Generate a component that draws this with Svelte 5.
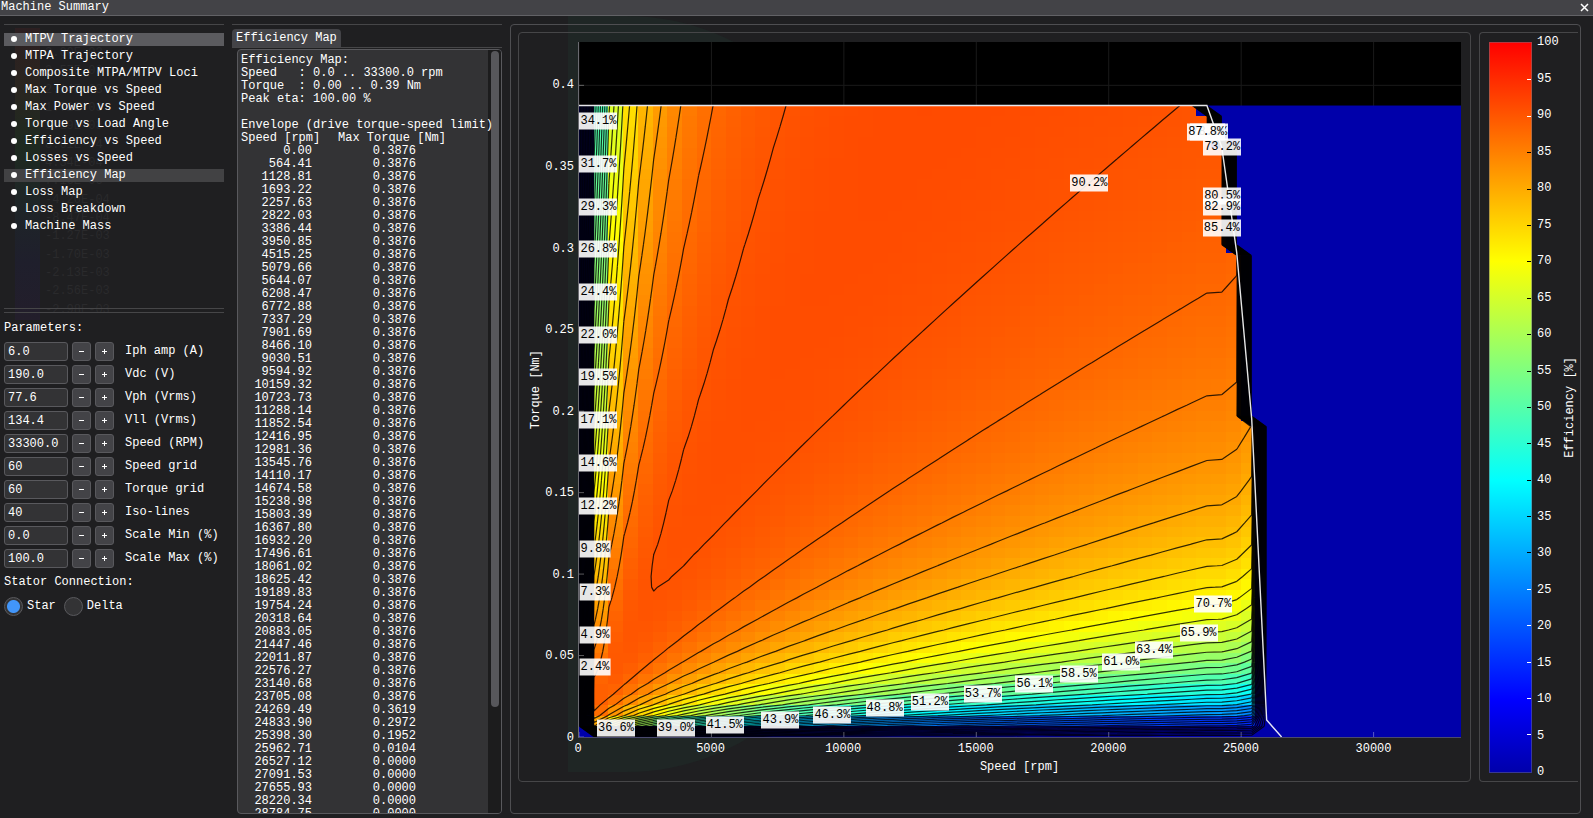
<script>
	const COUNT = 60;
	const MAX_RPM = 33300;
	const PEAK_NM = 0.3876;
	const AXIS_NM = 0.4266;
	const ISO_LINES = 40;

	// plot units used by the svg, it is stretched to the frame
	const W = 882;
	const H = 695;

	let pages = [
		"MTPV Trajectory", "MTPA Trajectory", "Composite MTPA/MTPV Loci", "Max Torque vs Speed",
		"Max Power vs Speed", "Torque vs Load Angle", "Efficiency vs Speed", "Losses vs Speed",
		"Efficiency Map", "Loss Map", "Loss Breakdown", "Machine Mass",
	];
	let selected = "Efficiency Map";
	let focused = "MTPV Trajectory";

	let params = [
		{ id: "iph", label: "Iph amp (A)", value: "6.0" },
		{ id: "vdc", label: "Vdc (V)", value: "190.0" },
		{ id: "vph", label: "Vph (Vrms)", value: "77.6" },
		{ id: "vll", label: "Vll (Vrms)", value: "134.4" },
		{ id: "rpm", label: "Speed (RPM)", value: "33300.0" },
		{ id: "sgrid", label: "Speed grid", value: "60" },
		{ id: "tgrid", label: "Torque grid", value: "60" },
		{ id: "iso", label: "Iso-lines", value: "40" },
		{ id: "smin", label: "Scale Min (%)", value: "0.0" },
		{ id: "smax", label: "Scale Max (%)", value: "100.0" },
	];
	let connection = "Star";

	function step(p, d) {
		p.value = (parseFloat(p.value) + d).toFixed(p.value.includes(".") ? 1 : 0);
		params = params;
	}

	const intro = `Efficiency Map:
Speed   : 0.0 .. 33300.0 rpm
Torque  : 0.00 .. 0.39 Nm
Peak eta: 100.00 %

Envelope (drive torque-speed limit)`;

	// speeds are single precision floats
	const falling = [0.3619, 0.2972, 0.1952, 0.0104];
	const envelope = Array.from({ length: COUNT }, (_, i) => ({
		rpm: Math.fround((i * MAX_RPM) / (COUNT - 1)),
		nm: i < 43 ? PEAK_NM : falling[i - 43] ?? 0,
	}));

	const px = (rpm) => (rpm / MAX_RPM) * W;
	const py = (nm) => H - (nm / AXIS_NM) * H;

	const weakening = { 43: 0.985, 45: 1.06 };
	function eta(i, j) {
		const s = envelope[i].rpm;
		const t = (j * PEAK_NM) / (COUNT - 1);
		if (!s || !t || i > 45) return 0;
		if (t > envelope[i].nm || (i === 42 && j === COUNT - 1)) return 0;
		const iron = (0.0002 + 5.14e-6 * Math.pow(s, 0.87)) * (weakening[i] ?? 1);
		return 100 / (1 + (1517 * t) / s + iron / t);
	}
	const grid = Array.from({ length: COUNT }, (_, i) => Array.from({ length: COUNT }, (_, j) => eta(i, j)));

	const jet = [
		[0, 0, 170], [0, 0, 255], [0, 85, 255], [0, 170, 255], [0, 255, 255], [85, 255, 170],
		[170, 255, 85], [255, 255, 0], [255, 170, 0], [255, 85, 0], [255, 0, 0],
	];
	function color(v) {
		const k = Math.min(9, Math.floor(v / 10));
		const f = v / 10 - k;
		return `rgb(${jet[k].map((c, n) => Math.round(c + (jet[k + 1][n] - c) * f)).join(",")})`;
	}

	const cellW = W / COUNT;
	const top = py(PEAK_NM);
	const cellH = (H - top) / COUNT;
	const cells = [];
	for (let i = 0; i < COUNT; i++)
		for (let j = 0; j < COUNT; j++)
			if (grid[i][j] > 0) cells.push({ x: i * cellW, y: H - (j + 1) * cellH, fill: color(grid[i][j]) });

	// marching squares over the node grid
	function contour(level) {
		const nx = W / (COUNT - 1);
		const ny = (H - top) / (COUNT - 1);
		let d = "";
		for (let i = 0; i < COUNT - 1; i++) {
			for (let j = 0; j < COUNT - 1; j++) {
				const c = [[i, j], [i + 1, j], [i + 1, j + 1], [i, j + 1]];
				const hits = [];
				for (let k = 0; k < 4; k++) {
					const [a, b] = [c[k], c[(k + 1) % 4]];
					const va = grid[a[0]][a[1]];
					const vb = grid[b[0]][b[1]];
					if (va < level === vb < level) continue;
					const f = (level - va) / (vb - va);
					const x = (a[0] + (b[0] - a[0]) * f) * nx;
					const y = H - (a[1] + (b[1] - a[1]) * f) * ny;
					hits.push(`${x.toFixed(2)} ${y.toFixed(2)}`);
				}
				for (let k = 0; k + 1 < hits.length; k += 2) d += `M${hits[k]}L${hits[k + 1]}`;
			}
		}
		return d;
	}
	const contours = Array.from({ length: ISO_LINES }, (_, k) => contour(((k + 1) * 100) / (ISO_LINES + 1)));

	const limit = envelope.slice(0, 48).map((e) => `${px(e.rpm)},${py(e.nm)}`).join(" ");

	// [value, rpm, Nm]
	const tags = [
		["34.1", 735, 0.3781], ["31.7", 735, 0.3517], ["29.3", 735, 0.3254], ["26.8", 735, 0.2993],
		["24.4", 735, 0.2732], ["22.0", 735, 0.2468], ["19.5", 735, 0.2207], ["17.1", 735, 0.1946],
		["14.6", 735, 0.1682], ["12.2", 735, 0.1418], ["9.8", 603, 0.1154], ["7.3", 603, 0.089],
		["4.9", 603, 0.0626], ["2.4", 603, 0.043], ["36.6", 1395, 0.0055], ["39.0", 3658, 0.0055],
		["41.5", 5505, 0.0074], ["43.9", 7606, 0.0104], ["46.3", 9567, 0.0135], ["48.8", 11538, 0.0178],
		["51.2", 13247, 0.0215], ["53.7", 15246, 0.0264], ["56.1", 17195, 0.0325], ["58.5", 18866, 0.0387],
		["61.0", 20475, 0.046], ["63.4", 21708, 0.0534], ["65.9", 23391, 0.0638], ["70.7", 23955, 0.0816],
		["73.2", 24283, 0.3622], ["78.0", 23793, 0.3714], ["80.5", 24283, 0.3321], ["82.9", 24283, 0.3254],
		["85.4", 24270, 0.3125], ["87.8", 23680, 0.3714], ["90.2", 19268, 0.3401],
	];

	const xTicks = [0, 5000, 10000, 15000, 20000, 25000, 30000];
	const yTicks = [0, 0.05, 0.1, 0.15, 0.2, 0.25, 0.3, 0.35, 0.4];
	const scale = Array.from({ length: 21 }, (_, k) => 100 - k * 5);

	const behind = [
		"3.00E-03", "2.57E-03", "2.14E-03", "1.72E-03", "1.29E-03", "8.61E-04", "4.34E-04", "7.16E-06",
		"-4.20E-04", "-8.47E-04", "-1.27E-03", "-1.70E-03", "-2.13E-03", "-2.56E-03", "-2.98E-03",
	];
</script>

<div class="window">
	<!-- window underneath, shows through the translucent background -->
	<div class="behind" aria-hidden="true">
		<div class="behind-bar"></div>
		<div class="behind-labels">
			{#each behind as b}<span>{b}</span>{/each}
		</div>
		<div class="behind-map"></div>
	</div>

	<header>
		<h1>Machine Summary</h1>
		<button class="close" aria-label="Close">
			<svg width="9" height="9" viewBox="0 0 9 9"><path d="M1 1L8 8M8 1L1 8" /></svg>
		</button>
	</header>

	<main>
		<aside>
			<ul class="pages">
				{#each pages as page}
					<li>
						<button
							class:selected={page === selected}
							class:focused={page === focused}
							on:click={() => (selected = focused = page)}
						><i></i>{page}</button>
					</li>
				{/each}
			</ul>
			<div class="rule"></div>
			<h2>Parameters:</h2>
			{#each params as p}
				<div class="param">
					<input id={p.id} type="text" bind:value={p.value} />
					<button aria-label="Decrease {p.label}" on:click={() => step(p, -1)}>
						<svg width="7" height="7" viewBox="0 0 7 7"><path d="M1 3.5H6" /></svg>
					</button>
					<button aria-label="Increase {p.label}" on:click={() => step(p, 1)}>
						<svg width="7" height="7" viewBox="0 0 7 7"><path d="M1 3.5H6M3.5 1V6" /></svg>
					</button>
					<label for={p.id}>{p.label}</label>
				</div>
			{/each}
			<h2 class="stator">Stator Connection:</h2>
			<div class="radios">
				<label><input type="radio" name="stator" value="Star" bind:group={connection} />Star</label>
				<label><input type="radio" name="stator" value="Delta" bind:group={connection} />Delta</label>
			</div>
		</aside>

		<section class="details">
			<div class="tabs"><button class="tab">Efficiency Map</button></div>
			<div class="report">
				<div class="report-text">
					<pre>{intro}</pre>
					<table>
						<thead><tr><th>Speed [rpm]</th><th>Max Torque [Nm]</th></tr></thead>
						<tbody>
							{#each envelope as e}
								<tr><td>{e.rpm.toFixed(2)}</td><td>{e.nm.toFixed(4)}</td></tr>
							{/each}
						</tbody>
					</table>
				</div>
				<div class="track"><div class="thumb"></div></div>
			</div>
		</section>

		<section class="charts">
			<div class="chart">
				<div class="y-axis">
					<span class="axis-name vertical">Torque [Nm]</span>
					<div class="y-ticks">
						{#each yTicks as t}
							<span style="top:{(py(t) / H) * 100}%">{t}</span>
						{/each}
					</div>
				</div>
				<div class="plot">
					<svg viewBox="0 0 {W} {H}" preserveAspectRatio="none">
						<g class="gridlines">
							{#each xTicks as t}<path d="M{px(t)} 0V{H}" />{/each}
							{#each yTicks as t}<path d="M0 {py(t)}H{W}" />{/each}
						</g>
						<rect x="0" y={top} width={W} height={H - top} fill="rgb(0,0,170)" />
						<g shape-rendering="crispEdges">
							{#each cells as c}
								<rect x={c.x} y={c.y} width={cellW} height={cellH} fill={c.fill} />
							{/each}
						</g>
						<g class="contours">
							{#each contours as d}<path {d} />{/each}
						</g>
						<polyline class="limit" points={limit} />
						<g class="ticks">
							{#each xTicks as t}<path d="M{px(t)} {H}v-5" />{/each}
							{#each yTicks as t}<path d="M0 {py(t)}h5" />{/each}
						</g>
					</svg>
					{#each tags as [v, rpm, nm]}
						<span class="tag" style="left:{(rpm / MAX_RPM) * 100}%;top:{(py(nm) / H) * 100}%">{v}%</span>
					{/each}
				</div>
				<div class="x-axis">
					<div class="x-ticks">
						{#each xTicks as t}
							<span style="left:{(t / MAX_RPM) * 100}%">{t}</span>
						{/each}
					</div>
					<span class="axis-name">Speed [rpm]</span>
				</div>
			</div>

			<div class="colorbar">
				<div class="gradient">
					{#each scale as v}
						<i class:light={v > 85 || v < 30} class:end={v === 0 || v === 100}></i>
					{/each}
				</div>
				<ol>
					{#each scale as v}<li>{v}</li>{/each}
				</ol>
				<span class="axis-name vertical">Efficiency [%]</span>
			</div>
		</section>
	</main>
</div>

<style>
	:global(body) {
		background: #1f1f21;
	}
	.window {
		position: relative;
		display: flex;
		flex-direction: column;
		height: 100vh;
		overflow: hidden;
		background: #1f1f21;
		color: white;
		font: 12px/13px "Liberation Mono", "DejaVu Sans Mono", monospace;
	}
	button, input {
		font: inherit;
		color: inherit;
		margin: 0;
		padding: 0;
		box-sizing: border-box;
	}
	h1, h2 {
		margin: 0;
		font: inherit;
	}
	ul, ol {
		list-style: none;
		margin: 0;
		padding: 0;
	}
	path {
		fill: none;
		stroke: white;
	}

	header {
		position: relative;
		display: flex;
		justify-content: space-between;
		align-items: center;
		height: 15px;
		flex: none;
		padding: 0 4px 0 1px;
		background: #434347;
		border-bottom: 1px solid #626266;
	}
	.close {
		display: flex;
		background: none;
		border: none;
	}
	.close path {
		stroke-width: 1.5;
	}

	main {
		position: relative;
		flex: 1;
		min-height: 0;
		display: grid;
		grid-template-columns: 220px 270px minmax(0, 1fr);
		gap: 8px;
		padding: 8px 12px 4px 4px;
	}

	.pages {
		display: flex;
		flex-direction: column;
		gap: 4px;
		height: 285px;
		box-sizing: border-box;
		padding-top: 8px;
		border-top: 1px solid #464648;
		border-bottom: 1px solid #464648;
	}
	.pages button {
		display: flex;
		align-items: center;
		width: 100%;
		height: 13px;
		padding-left: 7px;
		gap: 8px;
		background: none;
		border: none;
	}
	.pages i {
		width: 6px;
		height: 6px;
		margin-bottom: 2px;
		border-radius: 3px;
		background: white;
	}
	.pages .selected {
		background: #424244;
	}
	.pages .focused {
		background: #5b5b5f;
	}
	.rule {
		height: 3px;
		border-bottom: 1px solid #464648;
	}
	h2 {
		padding: 9px 0 7px;
	}
	.stator {
		padding: 4px 0 8px;
	}
	.param {
		display: flex;
		align-items: center;
		gap: 4px;
		margin-bottom: 4px;
	}
	.param input {
		width: 64px;
		height: 19px;
		padding: 0 3px;
		background: #333335;
		border: 1px solid #59595d;
		border-radius: 3px;
		outline: none;
	}
	.param button {
		display: flex;
		align-items: center;
		justify-content: center;
		width: 19px;
		height: 19px;
		background: #434347;
		border: 1px solid #59595d;
		border-radius: 3px;
	}
	.param label {
		padding-left: 7px;
	}
	.radios {
		display: flex;
		gap: 8px;
	}
	.radios label {
		display: flex;
		align-items: center;
		gap: 4px;
	}
	.radios input {
		appearance: none;
		width: 19px;
		height: 19px;
		border: 1px solid #59595d;
		border-radius: 50%;
		background: #333335;
	}
	.radios input:checked {
		background: radial-gradient(circle, #4296fa 6px, #333335 7px);
	}

	.details {
		display: flex;
		flex-direction: column;
		min-height: 0;
		border-top: 1px solid #464648;
	}
	.tabs {
		padding-top: 4px;
		border-bottom: 1px solid #464648;
	}
	.tab {
		display: block;
		height: 18px;
		padding: 1px 4px 0;
		background: #434347;
		border: none;
		border-radius: 4px 4px 0 0;
	}
	.report {
		flex: 1;
		min-height: 0;
		display: flex;
		overflow: hidden;
		margin: 1px 0 0 5px;
		background: #333335;
		border: 1px solid #59595d;
		border-radius: 4px;
	}
	.report-text {
		position: relative;
		z-index: 1;
		flex: 1;
		min-width: 0;
		padding: 4px 0 0 3px;
	}
	pre {
		margin: 0;
		font: inherit;
	}
	table {
		table-layout: fixed;
		width: 220px;
		border-collapse: collapse;
	}
	th, td {
		height: 13px;
		padding: 0;
		white-space: nowrap;
	}
	th {
		font-weight: normal;
		text-align: left;
	}
	th:first-child {
		width: 97px;
	}
	td {
		text-align: right;
	}
	td:first-child {
		padding-right: 26px;
	}
	td:last-child {
		padding-right: 45px;
	}
	.track {
		width: 13px;
		background: #1c1c1d;
	}
	.thumb {
		width: 8px;
		height: 86%;
		margin: 1px 0 0 3px;
		border-radius: 4px;
		background: #57575b;
	}

	.charts {
		display: grid;
		grid-template-columns: minmax(0, 1fr) 99px;
		gap: 8px;
		min-height: 0;
		padding: 7px 2px 31px 7px;
		border: 1px solid #4e4e51;
		border-radius: 4px;
	}
	.chart {
		display: grid;
		grid-template-columns: 59px minmax(0, 1fr);
		grid-template-rows: minmax(0, 1fr) 43px;
		min-height: 0;
		padding: 9px 9px 0 0;
		border: 1px solid #464648;
		border-radius: 4px;
	}
	.y-axis {
		display: flex;
		align-items: center;
		padding-left: 11px;
	}
	.axis-name {
		white-space: nowrap;
	}
	.vertical {
		writing-mode: vertical-rl;
		transform: rotate(180deg);
	}
	.y-ticks {
		position: relative;
		flex: 1;
		height: 100%;
	}
	.y-ticks span {
		position: absolute;
		right: 4px;
		transform: translateY(-50%);
	}
	.plot {
		position: relative;
		background: black;
		border-left: 1px solid #6a6a70;
		border-bottom: 1px solid #4a4a6e;
	}
	.plot svg {
		display: block;
		position: absolute;
		width: 100%;
		height: 100%;
	}
	.plot path, .limit {
		vector-effect: non-scaling-stroke;
	}
	.gridlines path {
		stroke: #1a1a1a;
	}
	.contours path {
		stroke: rgba(0, 0, 0, 0.8);
		stroke-width: 1.2;
	}
	.limit {
		fill: none;
		stroke: rgba(255, 255, 255, 0.9);
		stroke-width: 1.4;
	}
	.plot .ticks path {
		stroke: rgba(255, 255, 255, 0.35);
	}
	.tag {
		position: absolute;
		transform: translate(-50%, -50%);
		padding: 2px 1px;
		background: rgba(255, 255, 255, 0.9);
		color: black;
	}
	.x-axis {
		grid-column: 2;
		display: flex;
		flex-direction: column;
		align-items: center;
		gap: 5px;
		padding-top: 5px;
	}
	.x-ticks {
		position: relative;
		align-self: stretch;
		height: 13px;
	}
	.x-ticks span {
		position: absolute;
		transform: translateX(-50%);
	}

	.colorbar {
		display: flex;
		align-items: center;
		border: 1px solid #464648;
		border-right: none;
		border-radius: 4px 0 0 4px;
		padding: 9px 0 8px 9px;
		min-height: 0;
	}
	.gradient {
		display: flex;
		flex-direction: column;
		justify-content: space-between;
		align-items: flex-end;
		width: 43px;
		height: 100%;
		box-sizing: border-box;
		border: 1px solid rgba(110, 110, 128, 0.5);
		background: linear-gradient(
			rgb(255, 0, 0), rgb(255, 85, 0), rgb(255, 170, 0), rgb(255, 255, 0), rgb(170, 255, 85),
			rgb(85, 255, 170), rgb(0, 255, 255), rgb(0, 170, 255), rgb(0, 85, 255), rgb(0, 0, 255), rgb(0, 0, 170)
		) border-box;
	}
	.gradient i {
		width: 4px;
		height: 1px;
		background: black;
	}
	.gradient .light {
		background: white;
	}
	.gradient .end {
		visibility: hidden;
	}
	ol {
		display: flex;
		flex-direction: column;
		justify-content: space-between;
		width: 27px;
		height: 100%;
		padding-left: 5px;
	}
	ol li {
		height: 1px;
		line-height: 1px;
	}

	.behind {
		position: absolute;
		inset: 0;
	}
	.behind-bar {
		position: absolute;
		left: 15px;
		top: 28px;
		width: 25px;
		height: 292px;
		background: linear-gradient(#2c1f21, #2a2520, #1e2a20, #1e2527, #1f1f2c, #231e2b);
	}
	.behind-labels {
		position: absolute;
		left: 45px;
		top: 47px;
		display: flex;
		flex-direction: column;
		justify-content: space-between;
		height: 270px;
		color: #2a2a2c;
	}
	.behind-map {
		position: absolute;
		left: 568px;
		top: 16px;
		width: 290px;
		height: 756px;
		border-radius: 0 80% 80% 0 / 0 30% 30% 0;
		background: #1f2625;
	}
</style>
